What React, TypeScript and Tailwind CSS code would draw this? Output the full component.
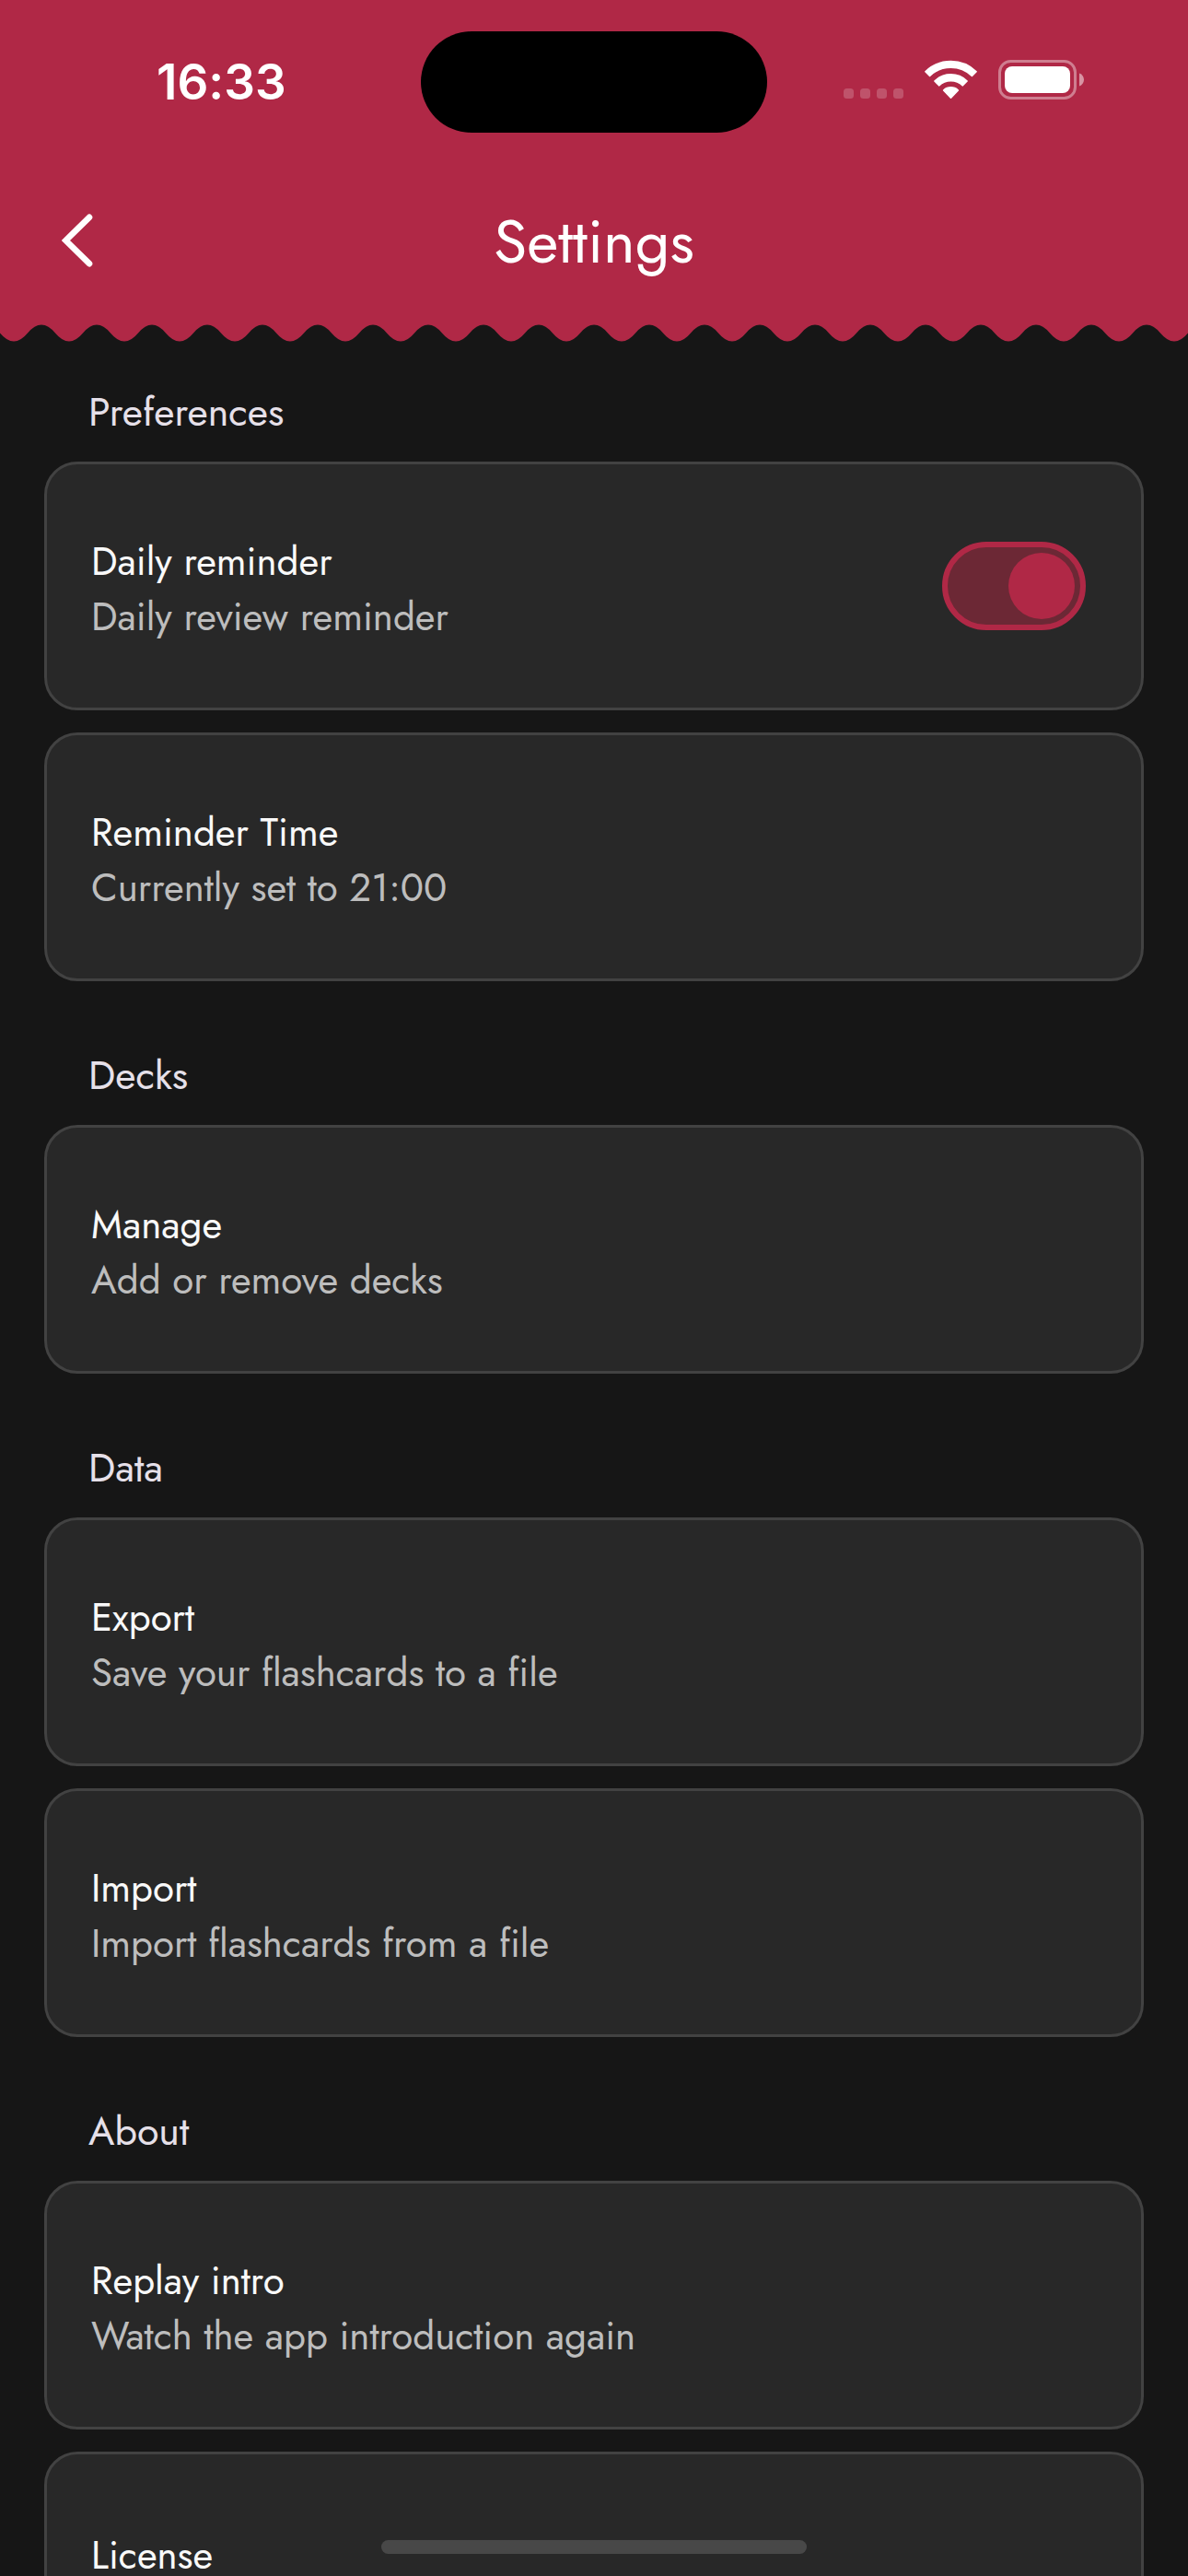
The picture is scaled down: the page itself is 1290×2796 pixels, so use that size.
import { useState } from 'react';

interface SettingItem {
  id: string;
  title: string;
  subtitle?: string;
}

interface SettingSection {
  name: string;
  items: SettingItem[];
}

const sections: SettingSection[] = [
  {
    name: 'Preferences',
    items: [
      { id: 'daily-reminder', title: 'Daily reminder', subtitle: 'Daily review reminder' },
      { id: 'reminder-time', title: 'Reminder Time', subtitle: 'Currently set to 21:00' },
    ],
  },
  {
    name: 'Decks',
    items: [{ id: 'manage', title: 'Manage', subtitle: 'Add or remove decks' }],
  },
  {
    name: 'Data',
    items: [
      { id: 'export', title: 'Export', subtitle: 'Save your flashcards to a file' },
      { id: 'import', title: 'Import', subtitle: 'Import flashcards from a file' },
    ],
  },
  {
    name: 'About',
    items: [
      { id: 'replay-intro', title: 'Replay intro', subtitle: 'Watch the app introduction again' },
      { id: 'license', title: 'License' },
    ],
  },
];

const cardClass =
  'flex w-full items-center justify-between rounded-[36px] border-[3px] border-[#424242] bg-[#282828] pl-12 pr-[60px] text-left';

const StatusBar = () => (
  <div className="relative flex h-[177px] items-center justify-between pb-1 pl-[170px] pr-[113px]">
    <span className="pt-1 font-['Inter',sans-serif] text-[53px] font-semibold">16:33</span>

    {/* Dynamic island */}
    <div className="absolute left-1/2 top-[34px] h-[110px] w-[376px] -translate-x-1/2 rounded-full bg-black" />

    <div className="flex items-end gap-[23px]">
      <svg width="65" height="12" viewBox="0 0 65 12" fill="#fff" fillOpacity="0.2" aria-hidden="true">
        {[0, 18, 36, 54].map((x) => (
          <rect key={x} x={x} y="0" width="11" height="11" rx="3.5" />
        ))}
      </svg>
      <svg width="57" height="43" viewBox="0 0 57 43" fill="#fff" stroke="#fff" strokeWidth="1.6" strokeLinejoin="round" aria-hidden="true">
        <path d="M.9 12.8A39.5 39.5 0 0 1 56.1 12.8L51.4 17.4A33 33 0 0 0 5.6 17.4Z" />
        <path d="M10.9 23A25.4 25.4 0 0 1 46.1 23L41.4 27.8A18.6 18.6 0 0 0 15.6 27.8Z" />
        <path d="M20.6 33A11.6 11.6 0 0 1 36.4 33L28.5 41.2Z" />
      </svg>
      <svg width="93" height="43" viewBox="0 0 93 43" fill="none" aria-hidden="true">
        <rect x="1.5" y="1.5" width="82" height="40" rx="12" stroke="#fff" strokeOpacity="0.4" strokeWidth="3" />
        <rect x="7" y="7" width="71" height="29" rx="8" fill="#fff" />
        <path d="M88 14.5C91 15.6 93 18.2 93 21.5S91 27.4 88 28.5Z" fill="#fff" fillOpacity="0.5" />
      </svg>
    </div>
  </div>
);

const Wave = () => (
  <svg className="h-[27px] w-full shrink-0" aria-hidden="true">
    <defs>
      <pattern id="wave" width="60" height="27" patternUnits="userSpaceOnUse">
        <path d="M0 0V16.5Q15 34.5 30 16.5T60 16.5V0Z" fill="#b02846" />
      </pattern>
    </defs>
    <rect width="100%" height="27" fill="url(#wave)" />
  </svg>
);

const CardText = ({ title, subtitle }: { title: string; subtitle?: string }) => (
  <span className="block pt-2">
    <span className="block text-[#f9f9f9]">{title}</span>
    {subtitle && <span className="block text-[#bdbdbd]">{subtitle}</span>}
  </span>
);

export default function App() {
  const [reminder, setReminder] = useState(true);

  return (
    <div className="flex h-screen flex-col bg-[#161616] font-['Jost','Lato',sans-serif] text-[42px] leading-[60px] text-white [font-variant-ligatures:none]">
      <header className="shrink-0 bg-[#b02846]">
        <StatusBar />
        <div className="grid grid-cols-[168px_1fr_168px] items-center">
          <button type="button" aria-label="Back" className="flex h-[168px] items-center justify-center">
            <svg width="34" height="58" viewBox="0 0 34 58" fill="none" stroke="#fff" strokeWidth="6.6" strokeLinecap="round" aria-hidden="true">
              <path d="M30 3.8 4.4 29 30 54.2" />
            </svg>
          </button>
          <h1 className="pt-0.5 text-center text-[66px] leading-[96px]">Settings</h1>
        </div>
      </header>
      <Wave />

      <main className="flex min-h-0 flex-1 flex-col gap-[72px] overflow-y-auto px-12 pb-24 pt-[45px] [scrollbar-width:none]">
        {sections.map((section) => (
          <section key={section.name}>
            <h2 className="mb-6 px-12 text-[43px] text-[#e6e0e9]">{section.name}</h2>
            <div className="flex flex-col gap-6">
              {section.items.map((item) =>
                item.id === 'daily-reminder' ? (
                  <label key={item.id} htmlFor={item.id} className={`${cardClass} py-[68px]`}>
                    <CardText title={item.title} subtitle={item.subtitle} />
                    <input
                      id={item.id}
                      type="checkbox"
                      role="switch"
                      checked={reminder}
                      onChange={(e) => setReminder(e.target.checked)}
                      className="flex h-24 w-[156px] shrink-0 appearance-none items-center rounded-full border-6 border-[#b02846] bg-[#6c2835] p-1.5 before:size-[72px] before:rounded-full before:bg-[#b02846] checked:justify-end"
                    />
                  </label>
                ) : (
                  <button
                    key={item.id}
                    type="button"
                    className={`${cardClass} ${item.subtitle ? 'py-[68px]' : 'py-[72px]'}`}
                  >
                    <CardText title={item.title} subtitle={item.subtitle} />
                  </button>
                )
              )}
            </div>
          </section>
        ))}
      </main>

      {/* Home indicator */}
      <div className="fixed bottom-6 left-1/2 h-[15px] w-[462px] -translate-x-1/2 rounded-full bg-[#484848]" />
    </div>
  );
}
